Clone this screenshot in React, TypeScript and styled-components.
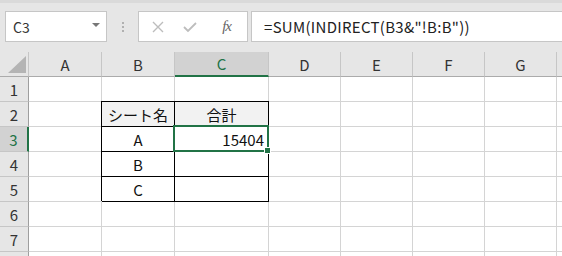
import styled, { createGlobalStyle } from "styled-components";

const GlobalStyle = createGlobalStyle`
  body {
    margin: 0;
    background: #ffffff;
  }
`;

const Window = styled.div`
  width: 562px;
  height: 256px;
  overflow: hidden;
  background: #e6e6e6;
  font-family: "Noto Sans CJK JP", "Liberation Sans", sans-serif;
  color: #222;
`;

const FormulaBar = styled.div`
  display: flex;
  align-items: flex-start;
  height: 52px;
  box-sizing: border-box;
  padding: 8px 0 0 5px;
  border-top: 3px solid #dadada;
`;

const NameBox = styled.div`
  width: 102px;
  height: 31px;
  box-sizing: border-box;
  background: #fff;
  border: 1px solid #c6c6c6;
  display: flex;
  align-items: center;
  justify-content: space-between;
  padding: 0 6px 0 7px;
  font-size: 14px;
  color: #333;
`;

const Caret = styled.span`
  width: 0;
  height: 0;
  border-left: 4px solid transparent;
  border-right: 4px solid transparent;
  border-top: 4px solid #777;
  margin-bottom: 3px;
`;

const Grip = styled.div`
  width: 31px;
  height: 31px;
  display: flex;
  flex-direction: column;
  align-items: center;
  justify-content: center;
  gap: 2px;

  & span {
    width: 2px;
    height: 2px;
    background: #b0b0b0;
  }
`;

const ButtonBox = styled.div`
  width: 110px;
  height: 31px;
  box-sizing: border-box;
  background: #fff;
  border: 1px solid #c6c6c6;
  display: flex;
  align-items: center;
  padding-left: 3px;
`;

const ToolButton = styled.div<{ $wide?: boolean }>`
  width: ${(p) => (p.$wide ? "42px" : "33px")};
  height: 100%;
  display: flex;
  align-items: center;
  justify-content: center;
`;

const Fx = styled.span`
  font-family: "Liberation Serif", serif;
  font-style: italic;
  font-size: 15px;
  color: #666;
  letter-spacing: -1px;
`;

const FormulaInput = styled.div`
  flex: 1;
  margin-left: 3px;
  height: 31px;
  box-sizing: border-box;
  background: #fff;
  border: 1px solid #c6c6c6;
  border-right: none;
  display: flex;
  align-items: center;
  padding-left: 12px;
  font-size: 15px;
  letter-spacing: 0.3px;
  color: #222;
  white-space: nowrap;
`;

const Grid = styled.div`
  display: grid;
  grid-template-columns: 29px 73px 73px 94px 72px 72px 72px 72px 1fr;
  grid-auto-rows: 25px;
  background: #fff;
`;

const Corner = styled.div`
  background: #e6e6e6;
  border-right: 1px solid #c6c6c6;
  border-bottom: 1px solid #ababab;
  display: flex;
  align-items: flex-end;
  justify-content: flex-end;
  padding: 0 2px 3px 0;
`;

const ColHeader = styled.div<{ $active?: boolean }>`
  background: ${(p) => (p.$active ? "#d2d2d2" : "#e6e6e6")};
  color: ${(p) => (p.$active ? "#217346" : "#333")};
  border-right: 1px solid #c6c6c6;
  border-bottom: ${(p) => (p.$active ? "2px solid #217346" : "1px solid #ababab")};
  display: flex;
  align-items: center;
  justify-content: center;
  font-size: 15px;
  overflow: hidden;
`;

const RowHeader = styled.div<{ $active?: boolean }>`
  background: ${(p) => (p.$active ? "#d2d2d2" : "#e6e6e6")};
  color: ${(p) => (p.$active ? "#217346" : "#333")};
  border-right: ${(p) => (p.$active ? "2px solid #217346" : "1px solid #9e9e9e")};
  border-bottom: 1px solid #c6c6c6;
  display: flex;
  align-items: center;
  justify-content: center;
  font-size: 15px;
`;

const Cell = styled.div<{
  $align?: "left" | "center" | "right";
  $boxed?: boolean;
  $shaded?: boolean;
  $selected?: boolean;
}>`
  position: ${(p) => (p.$selected ? "relative" : "static")};
  background: ${(p) => (p.$shaded ? "#f2f2f2" : "#fff")};
  border-right: 1px solid ${(p) => (p.$boxed ? "#000" : "#d4d4d4")};
  border-bottom: 1px solid ${(p) => (p.$boxed ? "#000" : "#d4d4d4")};
  box-shadow: ${(p) =>
    p.$boxed ? "-1px -1px 0 0 #000, 0 -1px 0 0 #000" : "none"};
  display: flex;
  align-items: center;
  justify-content: ${(p) =>
    p.$align === "right" ? "flex-end" : p.$align === "center" ? "center" : "flex-start"};
  padding: 0 4px;
  font-size: 15px;
  color: #111;
  white-space: nowrap;
`;

const Selection = styled.div`
  position: absolute;
  left: -2px;
  top: -2px;
  right: -1px;
  bottom: -1px;
  border: 2px solid #217346;
  z-index: 1;
  pointer-events: none;
`;

const FillHandle = styled.div`
  position: absolute;
  right: -4px;
  bottom: -4px;
  width: 5px;
  height: 5px;
  background: #217346;
  border: 1px solid #fff;
`;

// H is only a sliver at the right edge, so its letter is off screen
const cols = ["A", "B", "C", "D", "E", "F", "G", "H"];
const visibleCols = ["A", "B", "C", "D", "E", "F", "G"];
const rows = [1, 2, 3, 4, 5, 6, 7, 8];
const visibleRows = [1, 2, 3, 4, 5, 6, 7];

type CellData = { text: string; align?: "left" | "center" | "right"; shaded?: boolean };

const table: Record<string, CellData> = {
  "2B": { text: "シート名", align: "center", shaded: true },
  "2C": { text: "合計", align: "center", shaded: true },
  "3B": { text: "A", align: "center" },
  "3C": { text: "15404", align: "right" },
  "4B": { text: "B", align: "center" },
  "5B": { text: "C", align: "center" },
};

const activeRow = 3;
const activeCol = "C";

const App = () => {
  return (
    <Window>
      <GlobalStyle />
      <FormulaBar>
        <NameBox>
          <span>C3</span>
          <Caret />
        </NameBox>
        <Grip>
          <span />
          <span />
          <span />
        </Grip>
        <ButtonBox>
          <ToolButton>
            <svg width="12" height="12" viewBox="0 0 12 12">
              <path d="M1 1 L11 11 M11 1 L1 11" stroke="#bdbdbd" strokeWidth="1.4" fill="none" />
            </svg>
          </ToolButton>
          <ToolButton>
            <svg width="14" height="12" viewBox="0 0 14 12">
              <path d="M1 6 L5 10 L13 2" stroke="#bdbdbd" strokeWidth="1.8" fill="none" />
            </svg>
          </ToolButton>
          <ToolButton $wide>
            <Fx>fx</Fx>
          </ToolButton>
        </ButtonBox>
        <FormulaInput>=SUM(INDIRECT(B3&amp;"!B:B"))</FormulaInput>
      </FormulaBar>
      <Grid>
        <Corner>
          <svg width="18" height="17" viewBox="0 0 18 17">
            <path d="M18 0 L18 17 L0 17 Z" fill="#b4b4b4" />
          </svg>
        </Corner>
        {cols.map((c) => (
          <ColHeader key={c} $active={c === activeCol}>
            {visibleCols.includes(c) ? c : ""}
          </ColHeader>
        ))}
        {rows.map((r) => (
          <>
            <RowHeader key={`h${r}`} $active={r === activeRow}>
              {visibleRows.includes(r) ? r : ""}
            </RowHeader>
            {cols.map((c) => {
              const d = table[`${r}${c}`];
              const boxed = r >= 2 && r <= 5 && (c === "B" || c === "C");
              const selected = r === activeRow && c === activeCol;
              return (
                <Cell
                  key={`${r}${c}`}
                  $align={d?.align}
                  $boxed={boxed}
                  $shaded={d?.shaded}
                  $selected={selected}
                >
                  {d?.text}
                  {selected && (
                    <Selection>
                      <FillHandle />
                    </Selection>
                  )}
                </Cell>
              );
            })}
          </>
        ))}
      </Grid>
    </Window>
  );
};

export default App;
